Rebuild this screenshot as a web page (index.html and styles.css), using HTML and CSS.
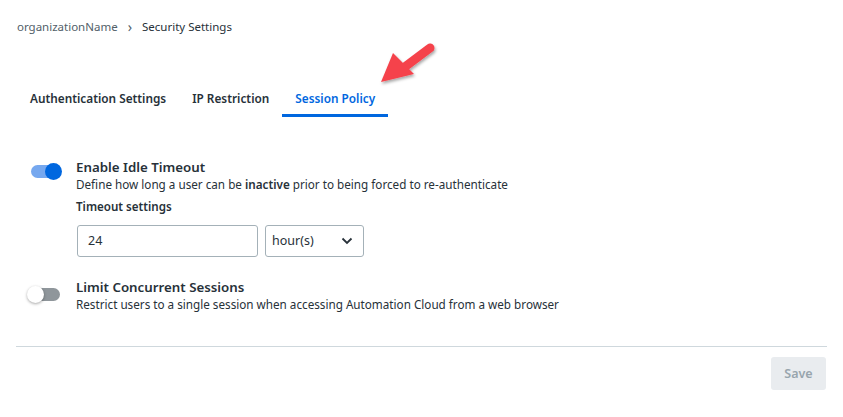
FILE: index.html
```html
<!DOCTYPE html>
<html>
<head>
<meta charset="utf-8">
<link rel="stylesheet" href="styles.css">
</head>
<body>
<div class="page">
  <div class="breadcrumb">
    <span class="crumb">organizationName</span>
    <span class="sep">&#8250;</span>
    <span class="crumb current">Security Settings</span>
  </div>
  <div class="tabs">
    <div class="tab">Authentication Settings</div>
    <div class="tab">IP Restriction</div>
    <div class="tab active">Session Policy</div>
  </div>
  <div class="settings">
    <div class="setting">
      <div class="toggle on"><span class="track"></span><span class="thumb"></span></div>
      <div class="setting-body">
        <div class="title">Enable Idle Timeout</div>
        <div class="desc">Define how long a user can be <b>inactive</b> prior to being forced to re-authenticate</div>
        <div class="label">Timeout settings</div>
        <div class="fields">
          <div class="input">24</div>
          <div class="select"><span>hour(s)</span>
            <svg class="chev" width="12" height="8" viewBox="0 0 12 8"><path d="M1.5 1.5 L6 6 L10.5 1.5" fill="none" stroke="#273139" stroke-width="1.8"/></svg>
          </div>
        </div>
      </div>
    </div>
    <div class="setting second">
      <div class="toggle off"><span class="track"></span><span class="thumb"></span></div>
      <div class="setting-body">
        <div class="title">Limit Concurrent Sessions</div>
        <div class="desc">Restrict users to a single session when accessing Automation Cloud from a web browser</div>
      </div>
    </div>
  </div>
  <div class="footer">
    <button class="save">Save</button>
  </div>
  <svg class="arrow" width="70" height="60" viewBox="0 0 70 60">
    <defs>
      <filter id="sh" x="-30%" y="-30%" width="160%" height="160%">
        <feDropShadow dx="1" dy="2" stdDeviation="1.5" flood-color="#000" flood-opacity="0.35"/>
      </filter>
    </defs>
    <g filter="url(#sh)" fill="#f5424b">
      <line x1="60" y1="11" x2="36" y2="29" stroke="#f5424b" stroke-width="9" stroke-linecap="round"/>
      <polygon points="11,45 23,16 44,37"/>
    </g>
  </svg>
</div>
</body>
</html>
```
FILE: styles.css
```css
* { box-sizing: border-box; }
html, body { margin: 0; padding: 0; background: #fff; }
body {
  font-family: "Noto Sans", "Open Sans", sans-serif;
  color: #273139;
  width: 843px;
  height: 417px;
  overflow: hidden;
}
.page {
  position: relative;
  padding: 17px 16px 0 16px;
}
.breadcrumb {
  display: flex;
  align-items: center;
  font-size: 11.5px;
  height: 20px;
  line-height: 20px;
  padding-left: 1px;
}
.crumb { color: #526069; }
.crumb.current { color: #273139; }
.sep {
  margin: 0 10px 0 10px;
  font-size: 14px;
  color: #526069;
}
.tabs {
  display: flex;
  margin-top: 51px;
  padding-left: 1px;
}
.tab {
  font-size: 11.8px;
  font-weight: 600;
  color: #273139;
  padding: 0 13px;
  height: 29px;
  line-height: 20px;
  border-bottom: 3px solid transparent;
}
.tab.active {
  color: #0067df;
  border-bottom-color: #0067df;
}
.settings {
  padding-top: 41px;
}
.setting {
  display: flex;
}
.setting.second {
  margin-top: 21px;
}
.toggle {
  position: relative;
  width: 46px;
  height: 20px;
  flex: none;
  margin-top: 3px;
}
.toggle .track {
  position: absolute;
  top: 4px;
  height: 13px;
  border-radius: 7px;
}
.toggle .thumb {
  position: absolute;
  top: 2px;
  width: 17px;
  height: 17px;
  border-radius: 50%;
}
.toggle.on .track {
  left: 15px;
  width: 28px;
  background: #76a8ef;
}
.toggle.on .thumb {
  left: 29px;
  background: #0067df;
}
.toggle.off {
  margin-top: 6px;
}
.toggle.off .track {
  left: 13px;
  width: 31px;
  background: #8f969b;
}
.toggle.off .thumb {
  left: 11px;
  background: #fff;
  box-shadow: 0 1px 3px rgba(0,0,0,0.35);
}
.setting-body {
  padding-left: 14px;
}
.title {
  font-size: 13.3px;
  font-weight: 600;
  line-height: 18px;
}
.desc {
  font-size: 11.7px;
  line-height: 16px;
  margin-top: 0;
  color: #273139;
}
.desc b { font-weight: 600; }
.label {
  font-size: 11.6px;
  font-weight: 600;
  line-height: 16px;
  margin-top: 7px;
}
.fields {
  display: flex;
  gap: 7px;
  margin-top: 10px;
  padding-left: 1px;
}
.input, .select {
  height: 32px;
  border: 1px solid #a4b1b8;
  border-radius: 3px;
  font-size: 12.5px;
  line-height: 30px;
  color: #273139;
}
.input {
  width: 181px;
  padding-left: 10px;
}
.select {
  width: 99px;
  padding: 0 10px 0 6px;
  display: flex;
  align-items: center;
  justify-content: space-between;
}
.footer {
  margin-top: 34px;
  border-top: 1px solid #cfd8dd;
  display: flex;
  justify-content: flex-end;
  padding-top: 10px;
}
.save {
  width: 55px;
  height: 33px;
  border: none;
  border-radius: 3px;
  background: #e9ecef;
  color: #98a5ad;
  font-family: "Noto Sans", sans-serif;
  font-size: 12.5px;
  font-weight: 600;
  margin-right: 1px;
}
.arrow {
  position: absolute;
  left: 370px;
  top: 37px;
}
```
